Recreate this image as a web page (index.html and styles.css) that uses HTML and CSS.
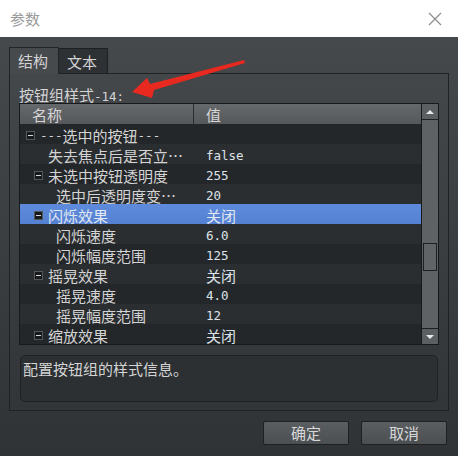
FILE: index.html
```html
<!DOCTYPE html>
<html lang="zh-CN">
<head>
    <meta charset="UTF-8">
    <title>参数</title>
    <link rel="stylesheet" href="styles.css">
</head>
<body>
    <div class="window">
        <div class="titlebar">
            <span class="title">参数</span>
            <svg class="close" width="14" height="14" viewBox="0 0 14 14">
                <path d="M1 1 L13 13 M13 1 L1 13" stroke="#8c8c8c" stroke-width="1.2" fill="none"/>
            </svg>
        </div>

        <div class="content">
            <div class="tabs">
                <div class="tab active">结构</div>
                <div class="tab">文本</div>
            </div>

            <div class="panel">
                <div class="caption">按钮组样式<span class="mono">-14:</span></div>

                <div class="table">
                    <div class="tree">
                        <div class="head">
                            <div class="col-name">名称</div>
                            <div class="col-value">值</div>
                        </div>

                        <div class="row lvl0">
                            <div class="name"><span class="slot"><i class="toggle"></i></span><span class="mono">---</span>选中的按钮<span class="mono">---</span></div>
                            <div class="value"></div>
                        </div>
                        <div class="row lvl1">
                            <div class="name"><span class="slot"></span>失去焦点后是否立…</div>
                            <div class="value mono">false</div>
                        </div>
                        <div class="row lvl1">
                            <div class="name"><span class="slot"><i class="toggle"></i></span>未选中按钮透明度</div>
                            <div class="value mono">255</div>
                        </div>
                        <div class="row lvl2">
                            <div class="name"><span class="slot"></span>选中后透明度变…</div>
                            <div class="value mono">20</div>
                        </div>
                        <div class="row lvl1 selected">
                            <div class="name"><span class="slot"><i class="toggle"></i></span>闪烁效果</div>
                            <div class="value">关闭</div>
                        </div>
                        <div class="row lvl2">
                            <div class="name"><span class="slot"></span>闪烁速度</div>
                            <div class="value mono">6.0</div>
                        </div>
                        <div class="row lvl2">
                            <div class="name"><span class="slot"></span>闪烁幅度范围</div>
                            <div class="value mono">125</div>
                        </div>
                        <div class="row lvl1">
                            <div class="name"><span class="slot"><i class="toggle"></i></span>摇晃效果</div>
                            <div class="value">关闭</div>
                        </div>
                        <div class="row lvl2">
                            <div class="name"><span class="slot"></span>摇晃速度</div>
                            <div class="value mono">4.0</div>
                        </div>
                        <div class="row lvl2">
                            <div class="name"><span class="slot"></span>摇晃幅度范围</div>
                            <div class="value mono">12</div>
                        </div>
                        <div class="row lvl1">
                            <div class="name"><span class="slot"><i class="toggle"></i></span>缩放效果</div>
                            <div class="value">关闭</div>
                        </div>
                    </div>

                    <div class="scrollbar">
                        <div class="sb-btn up"></div>
                        <div class="track"><div class="thumb"></div></div>
                        <div class="sb-btn down"></div>
                    </div>
                </div>

                <div class="desc">配置按钮组的样式信息。</div>
            </div>

            <div class="buttons">
                <button>确定</button>
                <button>取消</button>
            </div>
        </div>

        <!-- annotation arrow drawn over the dialog -->
        <svg class="arrow" width="458" height="456" viewBox="0 0 458 456">
            <polygon points="132,92 147,78 150,84 244,60 245,63 154,90 152,98" fill="#e8291f"/>
        </svg>
    </div>
</body>
</html>
```

FILE: styles.css
```css
body {
    margin: 0;
    font-family: "Noto Sans CJK SC", "DejaVu Sans", sans-serif;
    font-size: 15px;
    color: #d4d4d4;
    background-color: #2f3235;
}

.window {
    position: relative;
    width: 458px;
    height: 456px;
    overflow: hidden;
    background: linear-gradient(#484b4e, #303336);
}

.titlebar {
    height: 37px;
    background-color: #fff;
    display: flex;
    align-items: center;
    justify-content: space-between;
    padding: 0 16px 0 10px;
}

.title {
    color: #9b9b9b;
    font-size: 15px;
}

.close {
    display: block;
    margin-top: 1px;
}

.content {
    padding: 10px 0 0 9px;
}

.mono {
    font-family: "DejaVu Sans Mono", monospace;
    font-size: 12.5px;
}

/* tabs */
.tabs {
    display: flex;
    height: 27px;
    position: relative;
    z-index: 1;
}

.tab {
    width: 40px;
    height: 24px;
    margin-top: 1px;
    padding-left: 8px;
    border: 1px solid #1d1f21;
    border-bottom: none;
    background-color: #2e3134;
    line-height: 25px;
}

.tab.active {
    margin-top: 0;
    height: 26px;
    background-color: #474a4d;
    border-color: #222426;
}

.tab + .tab {
    border-left: none;
}

/* panel */
.panel {
    width: 420px;
    height: 325px;
    margin-top: -1px;
    padding: 11px 9px 0 9px;
    border: 1px solid #1f2123;
}

.caption {
    height: 18px;
    line-height: 19px;
    white-space: nowrap;
}

.table {
    display: flex;
    gap: 1px;
    width: 418px;
    height: 240px;
    border: 1px solid #17191b;
    background-color: #17191b;
}

.tree {
    width: 401px;
}

.head {
    display: flex;
    height: 20px;
    line-height: 21px;
    background: linear-gradient(#66696c, #55585b);
    color: #d6d6d6;
}

.col-name {
    width: 161px;
    padding-left: 12px;
    border-right: 1px solid #2b2d2f;
}

.col-value {
    padding-left: 12px;
}

.row {
    display: flex;
    height: 17px;
    padding-top: 3px;
    line-height: 17px;
    background-color: #24272a;
    white-space: nowrap;
}

.row:nth-child(odd) {
    background-color: #2b2e31;
}

.row.selected {
    background: linear-gradient(#5f8bdc, #5481d2);
    color: #e2e8f2;
}

.name {
    display: flex;
    width: 174px;
    box-sizing: border-box;
}

.lvl0 .name { padding-left: 6px; }
.lvl1 .name { padding-left: 14px; }
.lvl2 .name { padding-left: 22px; }

.slot {
    width: 14px;
    flex: none;
}

.toggle {
    position: relative;
    display: block;
    width: 7px;
    height: 7px;
    margin-top: 4px;
    border: 1px solid #55585b;
    background-color: #17191b;
}

.toggle::after {
    content: "";
    position: absolute;
    left: 1px;
    top: 3px;
    width: 5px;
    height: 1px;
    background-color: #d8d8d8;
}

.value {
    padding-left: 12px;
    color: #dde2e8;
}

.row.selected .value {
    color: #e2e8f2;
}

/* scrollbar */
.scrollbar {
    width: 16px;
    display: flex;
    flex-direction: column;
    background-color: #5e6265;
}

.sb-btn {
    height: 15px;
    display: flex;
    align-items: center;
    justify-content: center;
    background-color: #5b5f62;
}

.sb-btn.up {
    border-bottom: 1px solid #1d1f21;
}

.sb-btn.down {
    border-top: 1px solid #1d1f21;
}

.sb-btn.up::after {
    content: "";
    border-left: 4px solid transparent;
    border-right: 4px solid transparent;
    border-bottom: 4px solid #e8e8e8;
}

.sb-btn.down::after {
    content: "";
    border-left: 4px solid transparent;
    border-right: 4px solid transparent;
    border-top: 4px solid #e8e8e8;
}

.track {
    flex: 1;
    padding: 0 1px;
}

.thumb {
    margin-top: 123px;
    height: 26px;
    border: 1px solid #1d1f21;
    background-color: #606467;
}

/* description */
.desc {
    height: 41px;
    margin: 10px 1px 0 1px;
    padding: 2px 2px;
    border: 1px solid #1f2123;
    border-radius: 5px;
    background-color: #2d3033;
    line-height: 22px;
}

/* dialog buttons */
.buttons {
    display: flex;
    justify-content: flex-end;
    gap: 12px;
    padding: 10px 11px 0 0;
}

button {
    width: 86px;
    height: 24px;
    padding: 0;
    border: 1px solid #1e2022;
    border-radius: 2px;
    background: linear-gradient(#5a5e61, #4b4f52);
    color: #d8d8d8;
    font-family: "Noto Sans CJK SC", sans-serif;
    font-size: 15px;
    line-height: 22px;
}

.arrow {
    position: absolute;
    left: 0;
    top: 0;
    pointer-events: none;
}
```
